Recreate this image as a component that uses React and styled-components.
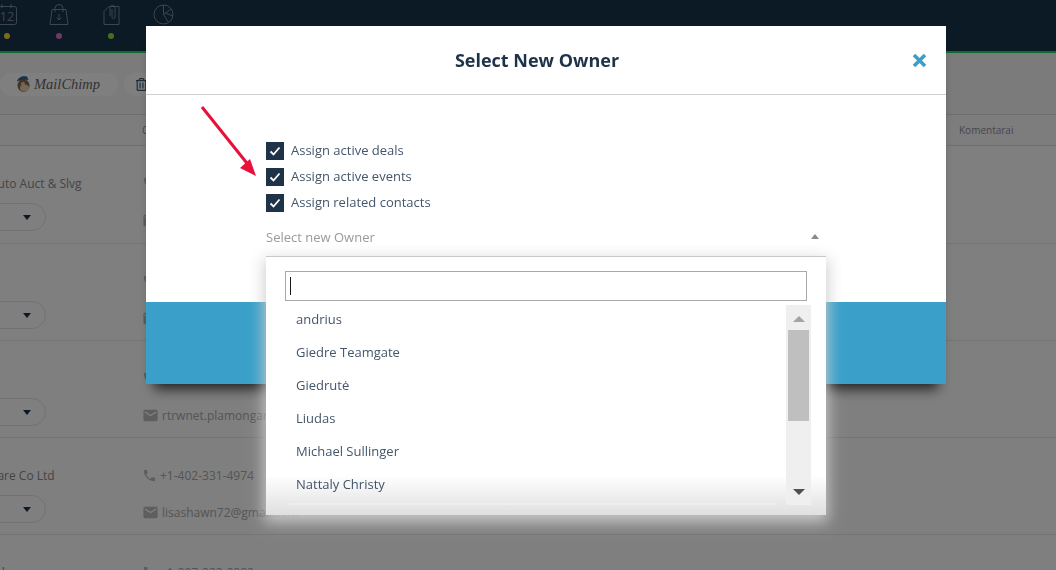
import React from "react";
import styled, { createGlobalStyle } from "styled-components";
import { MdEmail, MdPhone } from "react-icons/md";
import { FaRegTrashAlt } from "react-icons/fa";

const GlobalStyle = createGlobalStyle`
  html, body {
    margin: 0;
    height: 100%;
    overflow: hidden;
    font-family: "Open Sans", "Liberation Sans", sans-serif;
  }
  * { box-sizing: border-box; }
`;

const Page = styled.div`
  height: 100vh;
  overflow: hidden;
  background: #fefefe;
`;

const TopBar = styled.div`
  height: 53px;
  background: #18344a;
  border-bottom: 2px solid #1ed660;
  display: flex;
  margin-left: -19px;
`;

const NavItem = styled.div`
  width: 52px;
  padding-top: 4px;
  display: flex;
  flex-direction: column;
  align-items: center;
  gap: 8px;
  color: #748ca0;
  svg { display: block; }
`;

const Dot = styled.span`
  width: 6px;
  height: 6px;
  border-radius: 50%;
  background: ${(p) => p.$color};
`;

const Toolbar = styled.div`
  height: 61px;
  background: #f6f6f6;
  display: flex;
  align-items: center;
  gap: 6px;
  padding-top: 1px;
`;

const ToolPill = styled.div`
  height: 23px;
  width: ${(p) => p.$width}px;
  flex: none;
  border-radius: 12px;
  background: #ffffff;
  display: flex;
  align-items: center;
  padding-left: ${(p) => p.$pad}px;
  gap: 3px;
  color: #3f5a75;
  font-size: 13px;
`;

const ChimpText = styled.span`
  font-family: "Liberation Serif", serif;
  font-style: italic;
  font-size: 14.5px;
  color: #666666;
`;

const HeadRow = styled.div`
  height: 32px;
  background: #fbfbfb;
  border-top: 1px solid #dcdcdc;
  border-bottom: 1px solid #dcdcdc;
  display: grid;
  grid-template-columns: 142px 817px 1fr;
  align-items: center;
  font-size: 10px;
  color: #8c8ca0;
`;

const RowList = styled.div`
  & > :first-child { height: 98px; }
`;

const Row = styled.div`
  height: 97px;
  padding-top: 28px;
  border-bottom: 1px solid #e8e8e8;
  display: grid;
  grid-template-columns: 142px 1fr;
`;

const Name = styled.div`
  height: 18px;
  line-height: 20px;
  font-size: 12px;
  white-space: nowrap;
  color: #8a8a8a;
  margin-left: ${(p) => p.$shift || 0}px;
`;

const OwnerPill = styled.div`
  margin: 11px 0 0 -60px;
  width: 106px;
  height: 28px;
  border: 1px solid #e4e4e4;
  border-radius: 14px;
  display: flex;
  align-items: center;
  justify-content: flex-end;
  padding-right: 14px;
  &::after {
    content: "";
    border-left: 4px solid transparent;
    border-right: 4px solid transparent;
    border-top: 5px solid #1e3348;
  }
`;

const ContactLine = styled.div`
  height: 18px;
  display: flex;
  align-items: center;
  gap: ${(p) => p.$gap}px;
  margin-bottom: 19px;
  font-size: 12px;
  white-space: nowrap;
  color: #aaaaaa;
  svg { flex: none; font-size: ${(p) => p.$icon}px; color: #bcbcbc; }
`;

const Overlay = styled.div`
  position: fixed;
  inset: 0;
  background: rgba(0, 0, 0, 0.5);
  padding: 26px 0 0 146px;
`;

const Modal = styled.div`
  position: relative;
  width: 800px;
  height: 358px;
  background: #fff;
  display: flex;
  flex-direction: column;
  box-shadow: 0 13px 12px -8px rgba(0, 0, 0, 0.75);
`;

const ModalHeader = styled.div`
  height: 69px;
  flex: none;
  border-bottom: 1px solid #cfcfcf;
  display: flex;
  align-items: center;
  padding: 0 19px 0 16px;
`;

const Title = styled.h2`
  flex: 1;
  margin: 0;
  text-align: center;
  font-size: 18px;
  font-weight: 700;
  color: #1e3348;
`;

const CloseButton = styled.button`
  width: 15px;
  height: 15px;
  padding: 0;
  border: 0;
  background: none;
  color: #3aa0c9;
  svg { display: block; }
`;

const ModalBody = styled.div`
  flex: 1;
  padding: 47px 120px 0;
`;

const CheckRow = styled.label`
  height: 18px;
  margin-bottom: 8px;
  display: flex;
  align-items: center;
  gap: 7px;
  font-size: 13px;
  color: #44566c;
`;

const CheckText = styled.span`
  margin-bottom: 2px;
`;

const CheckBox = styled.span`
  width: 18px;
  height: 18px;
  background: #1e3348;
  display: flex;
  align-items: center;
  justify-content: center;
  color: #fff;
`;

const SelectBox = styled.div`
  position: relative;
  height: 35px;
  display: flex;
  align-items: center;
  justify-content: space-between;
  padding: 0 7px 2px 0;
  font-size: 13px;
  color: #9a9a9a;
  &::after {
    content: "";
    border-left: 4px solid transparent;
    border-right: 4px solid transparent;
    border-bottom: 5px solid #8a8a8a;
  }
`;

const Dropdown = styled.div`
  position: absolute;
  z-index: 2;
  top: 100%;
  left: 0;
  right: 0;
  height: 259px;
  margin-top: 1px;
  background: #fff;
  border-top: 1px solid #c8c8c8;
  padding: 14px 15px 0 19px;
  box-shadow: 0 5px 14px 2px rgba(205, 205, 205, 0.95);
  &::after {
    content: "";
    position: absolute;
    left: 0;
    right: 0;
    bottom: 0;
    height: 40px;
    background: linear-gradient(to bottom, rgba(0, 0, 0, 0), rgba(0, 0, 0, 0.125));
    pointer-events: none;
  }
`;

const SearchBox = styled.div`
  position: relative;
  height: 30px;
  margin-right: 4px;
  border: 1px solid #a9a9a9;
  &::before {
    content: "";
    position: absolute;
    left: 4px;
    top: 5px;
    height: 18px;
    width: 1px;
    background: #1a1a1a;
  }
`;

const ListWrap = styled.div`
  height: 204px;
  display: flex;
`;

const OptionList = styled.div`
  flex: 1;
  overflow: hidden;
  padding: 1.5px 8px 0 3px;
`;

const Option = styled.div`
  height: 33px;
  line-height: 33px;
  padding-left: 8px;
  font-size: 13px;
  color: #44566c;
  white-space: nowrap;
`;

const ActiveOption = styled(Option)`
  position: relative;
  z-index: 3;
  margin-top: 2px;
  background: #eeeeee;
  border-radius: 3px;
`;

const ScrollTrack = styled.div`
  position: relative;
  z-index: 3;
  width: 25px;
  margin-top: 4px;
  background: #efefef;
  display: flex;
  flex-direction: column;
  align-items: center;
  padding: 0 2px;
`;

const ScrollArrow = styled.span`
  position: absolute;
  ${(p) => (p.$down ? "bottom: 10px;" : "top: 11px;")}
  border-left: 6px solid transparent;
  border-right: 6px solid transparent;
  ${(p) => (p.$down ? "border-top: 6px solid #505050;" : "border-bottom: 6px solid #a3a3a3;")}
`;

const ScrollThumb = styled.div`
  width: 21px;
  height: 91px;
  margin-top: 25px;
  background: #bfbfbf;
`;

const ModalFooter = styled.div`
  height: 82px;
  flex: none;
  background: #3aa0c9;
`;

const ArrowMark = styled.svg`
  position: absolute;
  left: 54px;
  top: 79px;
  pointer-events: none;
`;

const rows = [
  { name: "Auto Auct & Slvg", shift: -10, phone: "+1-770-531-2291", email: "autoauct@gmail.com" },
  { name: "", phone: "+1-415-220-1180", email: "info@teamgate.com" },
  { name: "", phone: "+1-316-841-7702", email: "rtrwnet.plamongarden@gmail.com" },
  { name: "Software Co Ltd", shift: -34, phone: "+1-402-331-4974", email: "lisashawn72@gmail.com" },
  { name: "Ltd", shift: -13, phone: "+1-207-222-2882", email: "office@gmail.com" },
];

const owners = ["andrius", "Giedre Teamgate", "Giedrutė", "Liudas", "Michael Sullinger", "Nattaly Christy"];
const checks = ["Assign active deals", "Assign active events", "Assign related contacts"];

const CalendarIcon = () => (
  <svg width="22" height="21" viewBox="0 0 22 21" fill="none" stroke="currentColor" strokeWidth="1">
    <rect x="1.5" y="2.5" width="19" height="18" rx="2" />
    <path d="M6 0v4M15 0v4" />
    <text x="11" y="17" textAnchor="middle" fontSize="12.5" fontFamily="Open Sans" fill="currentColor" stroke="none">12</text>
  </svg>
);

const BagIcon = () => (
  <svg width="20" height="21" viewBox="0 0 20 21" fill="none" stroke="currentColor" strokeWidth="1">
    <path d="M3 5.5h14l2 15H1zM6 8V4.5a4 4 0 0 1 8 0V8" />
    <path d="M10 10v6M7.5 13.5L10 16l2.5-2.5" />
  </svg>
);

const ClipIcon = () => (
  <svg width="17" height="21" viewBox="0 0 17 21" fill="none" stroke="currentColor" strokeWidth="1">
    <path d="M6 2.5h10v18H1V7.5z" />
    <path d="M7 12V4a2.5 2.5 0 0 1 5 0v9a1.5 1.5 0 0 1-3 0V5" />
  </svg>
);

const PieIcon = () => (
  <svg width="21" height="21" viewBox="0 0 21 21" fill="none" stroke="currentColor" strokeWidth="1">
    <circle cx="10.5" cy="10.5" r="9.5" />
    <path d="M10.5 1v9.5l5 8M10.5 10.5L18 5M12.5 9l7.5 3" />
  </svg>
);

const MonkeyIcon = () => (
  <svg width="15" height="18" viewBox="0 0 15 18">
    <ellipse cx="7.5" cy="10.5" rx="6" ry="6.5" fill="#8a6a52" />
    <ellipse cx="8.5" cy="13" rx="4.5" ry="3.5" fill="#e8cdb0" />
    <circle cx="7" cy="9" r="2" fill="#e8cdb0" />
    <path d="M1 6.5C2 2.5 6 .5 11 1.5l1.5 3.5C8 4.5 4 5 1 6.5z" fill="#2f628c" />
  </svg>
);

export default function App() {
  return (
    <Page>
      <GlobalStyle />
      <TopBar>
        <NavItem><CalendarIcon /><Dot $color="#f5d63d" /></NavItem>
        <NavItem><BagIcon /><Dot $color="#dc74c4" /></NavItem>
        <NavItem><ClipIcon /><Dot $color="#8ae034" /></NavItem>
        <NavItem><PieIcon /><Dot $color="#8ae0e0" /></NavItem>
      </TopBar>
      <Toolbar>
        <ToolPill $width={118} $pad={16}>
          <MonkeyIcon />
          <ChimpText>MailChimp</ChimpText>
        </ToolPill>
        <ToolPill $width={60} $pad={11}><FaRegTrashAlt /></ToolPill>
      </Toolbar>
      <HeadRow>
        <span />
        <span>Contacts</span>
        <span>Komentarai</span>
      </HeadRow>
      <RowList>
        {rows.map((r) => (
          <Row key={r.phone}>
            <div>
              <Name $shift={r.shift}>{r.name}</Name>
              <OwnerPill />
            </div>
            <div>
              <ContactLine $gap={3} $icon={15}><MdPhone />{r.phone}</ContactLine>
              <ContactLine $gap={3} $icon={17}><MdEmail />{r.email}</ContactLine>
            </div>
          </Row>
        ))}
      </RowList>
      <Overlay>
        <Modal>
          <ModalHeader>
            <Title>Select New Owner</Title>
            <CloseButton>
              <svg width="15" height="15" viewBox="0 0 15 15" stroke="currentColor" strokeWidth="3.6">
                <path d="M2 2l11 11M13 2L2 13" />
              </svg>
            </CloseButton>
          </ModalHeader>
          <ModalBody>
            {checks.map((c) => (
              <CheckRow key={c}>
                <CheckBox>
                  <svg width="12" height="10" viewBox="0 0 12 10" fill="none" stroke="currentColor" strokeWidth="1.8">
                    <path d="M1.5 5.5L4.5 8.5L10.5 1.5" />
                  </svg>
                </CheckBox>
                <CheckText>{c}</CheckText>
              </CheckRow>
            ))}
            <SelectBox>
              Select new Owner
              <Dropdown>
                <SearchBox />
                <ListWrap>
                  <OptionList>
                    {owners.map((o) => <Option key={o}>{o}</Option>)}
                    <ActiveOption />
                  </OptionList>
                  <ScrollTrack>
                    <ScrollArrow />
                    <ScrollThumb />
                    <ScrollArrow $down />
                  </ScrollTrack>
                </ListWrap>
              </Dropdown>
            </SelectBox>
          </ModalBody>
          <ModalFooter />
          <ArrowMark width="66" height="76" viewBox="0 0 66 76">
            <path d="M2 2L50 62" stroke="#e8103a" strokeWidth="3" fill="none" />
            <path d="M56 71L40 63L50 54z" fill="#e8103a" />
          </ArrowMark>
        </Modal>
      </Overlay>
    </Page>
  );
}
